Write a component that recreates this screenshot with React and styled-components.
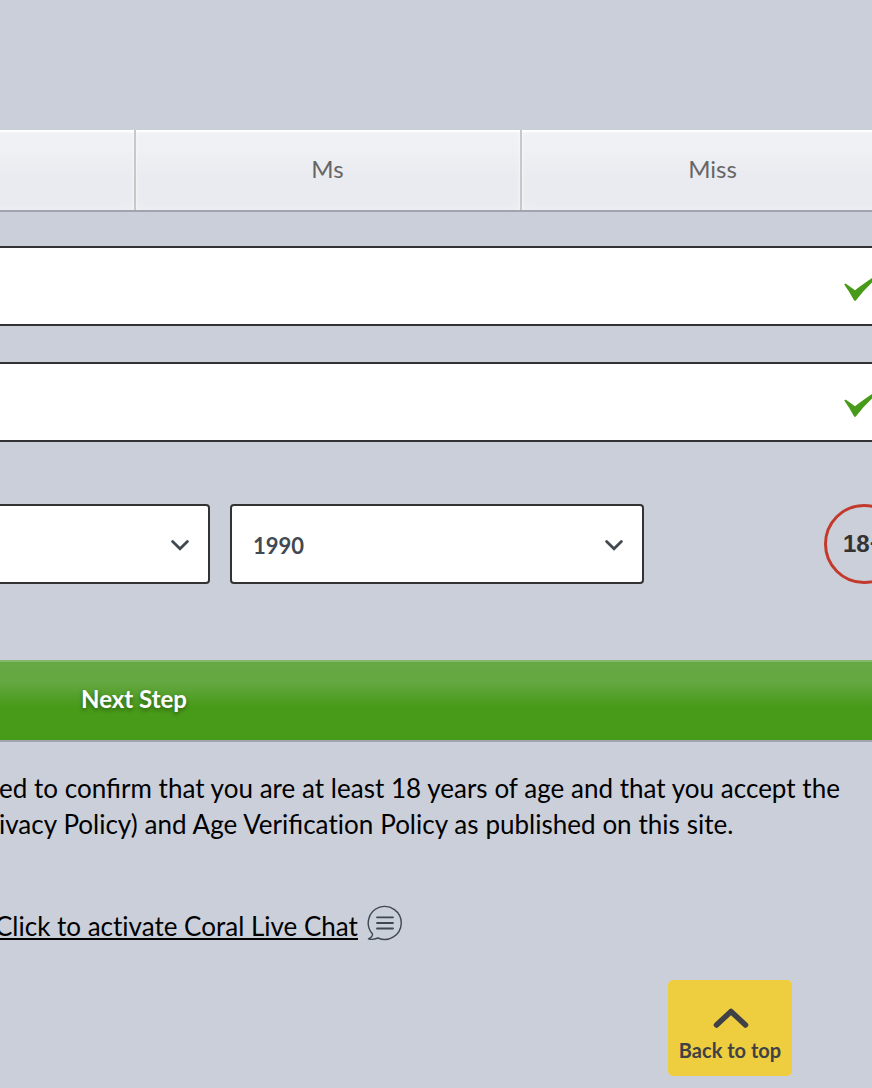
import React from "react";
import styled, { createGlobalStyle } from "styled-components";

const GlobalStyle = createGlobalStyle`
  * { box-sizing: border-box; }
  html, body { margin: 0; background: #cbcfda; }
  body { font-family: Lato, "Liberation Sans", sans-serif; color: #000; }
`;

const Page = styled.main`
  width: 872px;
  height: 1088px;
  overflow: hidden;
  padding-top: 130px;
  background: #cbcfda;
`;

const TitleTabs = styled.div`
  display: flex;
  width: 1156px;
  height: 82px;
  margin-left: -250px;
  border-bottom: 2px solid #a0a4af;
`;

const TitleTab = styled.button`
  flex: 0 0 ${(p) => p.$width || 386}px;
  height: 80px;
  margin: 0;
  padding: 0 1px 2px 0;
  border: 0;
  border-right: 2px solid #c7c8ca;
  background: linear-gradient(#f0f1f5 0%, #eff0f4 25%, #eaebf0 58%, #eaebf0 100%);
  box-shadow: inset 0 2px 2px #fff, inset 0 0 10px rgba(255, 255, 255, 0.35);
  font: 400 24px/78px Lato, sans-serif;
  color: #666;
`;

const Field = styled.div`
  display: flex;
  align-items: center;
  height: 80px;
  margin-top: ${(p) => p.$gap}px;
  padding: 4px 0 0 844px;
  background: #fff;
  border: solid #333;
  border-width: 2px 0;
`;

const CheckIcon = styled.svg`
  flex: none;
  width: 36px;
  height: 28px;
`;

const BirthRow = styled.div`
  display: flex;
  height: 80px;
  margin-top: 62px;
`;

const Select = styled.div`
  display: flex;
  flex: none;
  align-items: center;
  justify-content: space-between;
  width: ${(p) => p.$width}px;
  height: 80px;
  margin-left: ${(p) => p.$left}px;
  padding: 3px 18px 0 21px;
  background: #fff;
  border: 2px solid #333;
  border-radius: 4px;
  font-size: 22px;
  font-weight: 700;
  color: #414a52;
`;

const SelectChevron = styled.svg`
  width: 20px;
  height: 14px;
  margin-top: -2px;
`;

const AgeBadge = styled.div`
  flex: none;
  width: 80px;
  height: 80px;
  margin-left: 180px;
  padding-left: 16px;
  border: 3px solid #c23a2b;
  border-radius: 50%;
  font: 700 24px/74px "Liberation Sans", sans-serif;
  color: #333;
`;

const NextButton = styled.button`
  display: block;
  width: 100%;
  height: 82px;
  margin: 76px 0 0;
  padding: 0 604px 4px 0;
  border: 0;
  border-top: 2px solid #84b869;
  border-bottom: 2px solid #a0a4af;
  background: linear-gradient(#67a945 0%, #64a842 25%, #489a19 58%, #489a19 100%);
  font: 700 24px/72px Lato, sans-serif;
  color: #fff;
  text-shadow: 0 2px 4px rgba(0, 0, 0, 0.4);
`;

const Terms = styled.p`
  margin: 28px 0 0 -1px;
  font-size: 26px;
  line-height: 36px;
  white-space: nowrap;
`;

const Line = styled.span`
  display: block;
  word-spacing: ${(p) => p.$spacing}px;
`;

const Unjoined = styled.span`
  font-variant-ligatures: none;
`;

const ChatRow = styled.div`
  display: flex;
  align-items: flex-start;
  margin: 63px 0 0 -5px;
`;

const ChatLink = styled.a`
  height: 32px;
  margin-top: 3px;
  border-bottom: 2px solid #000;
  font-size: 26px;
  line-height: 36px;
  white-space: nowrap;
  color: #000;
`;

const ChatIcon = styled.svg`
  width: 36px;
  height: 36px;
  margin-left: 9px;
`;

const BackToTop = styled.button`
  display: flex;
  flex-direction: column;
  align-items: center;
  width: 124px;
  height: 96px;
  margin: 39px 0 0 668px;
  padding: 27px 0 0;
  border: 0;
  border-radius: 5px;
  background: #eecd3f;
  font: 700 20px/24px Lato, sans-serif;
  white-space: nowrap;
  color: #404146;
`;

const TopArrow = styled.svg`
  flex: none;
  width: 36px;
  height: 22px;
  margin: 0 0 9px 2px;
`;

const Check = () => (
  <CheckIcon viewBox="0 0 36 28">
    <path d="M0.3 10.6Q0.6 9.4 2 9.8L11 16.2Q20 9.5 34 0L36 1.5Q22 13 12 26.3Q10.9 27.6 10 26.2Q5.5 18 0.3 10.6Z" fill="#489a19" />
  </CheckIcon>
);

const Chevron = () => (
  <SelectChevron viewBox="0 0 20 14">
    <path d="M2.6 3.5L10 10.8L17.4 3.5" fill="none" stroke="#414a52" strokeWidth="2.8" strokeLinecap="round" />
  </SelectChevron>
);

export default function App() {
  return (
    <>
      <GlobalStyle />
      <Page>
        <TitleTabs>
          <TitleTab aria-label="Mrs" />
          <TitleTab>Ms</TitleTab>
          <TitleTab $width={384}>Miss</TitleTab>
        </TitleTabs>
        <Field $gap={34}><Check /></Field>
        <Field $gap={36}><Check /></Field>
        <BirthRow>
          <Select $width={214} $left={-4}><span /><Chevron /></Select>
          <Select $width={414} $left={20}>1990<Chevron /></Select>
          <AgeBadge>18+</AgeBadge>
        </BirthRow>
        <NextButton>Next Step</NextButton>
        <Terms>
          <Line $spacing={0.12}>ed to confirm that you are at least 18 years of age and that you accept the</Line>
          <Line $spacing={0.25}>ivacy Policy) and Age Verifica<Unjoined>ti</Unjoined>on Policy as published on this site.</Line>
        </Terms>
        <ChatRow>
          <ChatLink>Click to ac<Unjoined>ti</Unjoined>vate Coral Live Chat</ChatLink>
          <ChatIcon viewBox="0 0 36 36" fill="none" stroke="#3f4851">
            <path d="M5.5 29A16.5 16.5 0 1 1 11 33C7 34.5 4 34.8 1.5 33.8C4.2 32.6 5.6 31 5.5 29Z" strokeWidth="1.4" strokeLinejoin="round" />
            <path d="M10 12.3H26M10 18H26M10 23.5H26" strokeWidth="1.8" strokeLinecap="round" />
          </ChatIcon>
        </ChatRow>
        <BackToTop>
          <TopArrow viewBox="0 0 36 22">
            <path d="M3.5 18L18 4.5L32.5 18" fill="none" stroke="#404146" strokeWidth="5.5" strokeLinecap="round" strokeLinejoin="round" />
          </TopArrow>
          Back to top
        </BackToTop>
      </Page>
    </>
  );
}
